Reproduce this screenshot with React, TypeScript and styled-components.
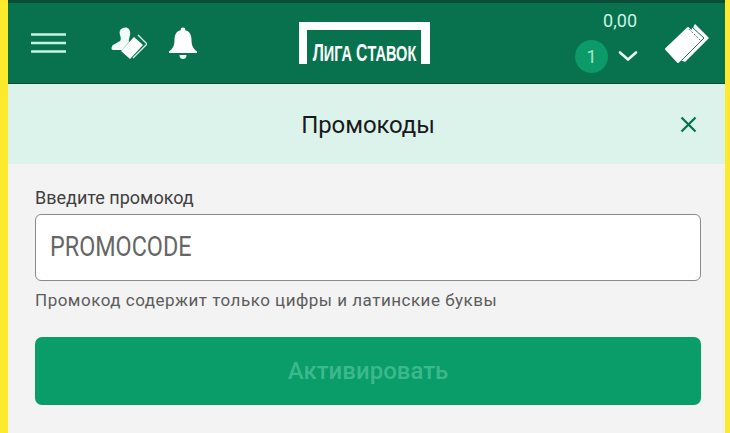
import React from "react";
import styled, { createGlobalStyle } from "styled-components";

const Global = createGlobalStyle`
  html, body { margin: 0; padding: 0; background: #f3f3f3; }
  * { box-sizing: border-box; }
`;

const Frame = styled.div`
  width: 730px;
  height: 433px;
  overflow: hidden;
  border-left: 8px solid #fdea2c;
  border-right: 5px solid #fdea2c;
  background: #f3f3f3;
  font-family: Roboto, "Noto Sans", sans-serif;
  display: flex;
  flex-direction: column;
`;

const Header = styled.header`
  height: 84px;
  flex: none;
  background: #08724f;
  border-top: 3px solid #0b4c39;
  border-bottom: 1px solid #0a4f3b;
  display: flex;
  align-items: center;
`;

const LeftIcons = styled.div`
  width: 280px;
  display: flex;
  align-items: center;
  padding-left: 23px;
`;

const IconSlot = styled.div<{ $w: number; $ml?: number }>`
  width: ${(p) => p.$w}px;
  margin-left: ${(p) => p.$ml ?? 0}px;
  display: flex;
  flex: none;
`;

const LogoFrame = styled.div`
  margin-left: 11px;
  width: 131px;
  height: 42px;
  flex: none;
  border-top: 8px solid #fff;
  border-left: 8px solid #fff;
  border-right: 9px solid #fff;
  display: flex;
  align-items: flex-end;
  justify-content: center;
`;

const LogoText = styled.div`
  flex: none;
  color: #fff;
  font-family: "Liberation Sans", sans-serif;
  font-weight: 700;
  font-size: 22px;
  line-height: 20px;
  white-space: nowrap;
  text-transform: uppercase;
  transform: scaleX(0.66);
`;

const LogoInitial = styled.span`
  font-size: 24px;
`;

const Balance = styled.div`
  margin-left: 138px;
  margin-bottom: 2px;
  width: 70px;
  display: flex;
  flex-direction: column;
  align-items: flex-end;
`;

const Amount = styled.div`
  color: #c8f5e6;
  font-size: 18px;
  line-height: 20px;
  margin-right: 1px;
`;

const CountRow = styled.div`
  display: flex;
  align-items: center;
  gap: 10px;
  margin-top: 9px;
`;

const Badge = styled.div`
  width: 33px;
  height: 33px;
  border-radius: 50%;
  background: #0c9a68;
  color: #a9e6cf;
  font-size: 18px;
  display: flex;
  align-items: center;
  justify-content: center;
`;

const Banner = styled.div`
  height: 80px;
  flex: none;
  background: #dcf3ec;
  position: relative;
  display: flex;
  align-items: center;
  justify-content: center;
  color: #1a1a1a;
  font-size: 24px;
  letter-spacing: -0.1px;
  padding: 1px 0 0 3px;
`;

const Close = styled.div`
  position: absolute;
  right: 28px;
  top: 32px;
  display: flex;
`;

const Form = styled.main`
  padding: 23px 24px 0 27px;
  display: flex;
  flex-direction: column;
`;

const Label = styled.div`
  color: #3f3f3f;
  font-size: 18px;
  line-height: 22px;
`;

const Input = styled.div`
  margin-top: 5px;
  height: 67px;
  border: 1px solid #8a8a8a;
  border-radius: 6px;
  background: #fff;
  display: flex;
  align-items: center;
  padding-left: 14px;
  padding-bottom: 1px;
`;

const InputValue = styled.span`
  color: #666;
  font-size: 27px;
  transform: scaleX(0.865);
  transform-origin: left center;
`;

const Hint = styled.div`
  margin-top: 8px;
  color: #5c5c5c;
  font-size: 17px;
  line-height: 22px;
  letter-spacing: 0.5px;
`;

const Action = styled.div`
  margin-top: 26px;
  height: 68px;
  border-radius: 7px;
  background: #0a9c69;
  color: #3cb98c;
  font-size: 24px;
  font-weight: 500;
  display: flex;
  align-items: center;
  justify-content: center;
`;

const Burger = () => (
  <svg width="36" height="22" viewBox="0 0 36 22">
    <path d="M0 2.5h35M0 11h35M0 19.5h35" stroke="#c5f3e4" strokeWidth="2.6" />
  </svg>
);

const Person = () => (
  <svg width="36" height="32" viewBox="0 0 36 32">
    <path d="M12 1c5-2 8 2 7 7-.5 3-1.5 5-1 7l-7 8H2c-2 0-2-3 0-5l7-4c1-1 1-3 0-6-1-3 0-6 3-7z" fill="#f2fbf8" />
    <path d="M23 10l9 8-13 14-9-8z" fill="#fff" />
    <path d="M27 8l9 9-14 14" fill="none" stroke="#d6f3ea" strokeWidth="1.4" />
  </svg>
);

const Bell = () => (
  <svg width="28" height="33" viewBox="0 0 28 33">
    <circle cx="14" cy="3" r="2.4" fill="#fff" />
    <path d="M14 3c6 0 8.500 4 8.500 10 0 6 2 9 5.500 11.500V26H0v-1.500C3.500 22 5.500 19 5.500 13 5.500 7 8 3 14 3z" fill="#fff" />
    <path d="M10.500 28h7c0 3-1.500 4-3.500 4s-3.500-1-3.500-4z" fill="#e4f7f0" />
  </svg>
);

const Chevron = () => (
  <svg width="20" height="12" viewBox="0 0 20 12">
    <path d="M2 1.500l8 7L18 1.500" fill="none" stroke="#e8fbf4" strokeWidth="2.600" strokeLinecap="round" />
  </svg>
);

const Ticket = () => (
  <svg width="50" height="46" viewBox="0 0 50 46">
    <path d="M33 5l13 13-23 23-3-1z" fill="#fff" stroke="#fff" strokeWidth="1.500" strokeLinejoin="round" />
    <path d="M30 7l12 11-22 22-2-1z" fill="#fff" stroke="#08724f" strokeWidth="1" strokeLinejoin="round" />
    <path d="M4 29L26 8l12 12-22 22z" fill="#fff" stroke="#fff" strokeWidth="2" strokeLinejoin="round" />
    <path d="M27 9l12 12" stroke="#4d7f6e" strokeWidth="1" strokeDasharray="2 1.500" />
  </svg>
);

const CloseIcon = () => (
  <svg width="17" height="17" viewBox="0 0 17 17">
    <path d="M1.500 1.500l14 14M15.500 1.500l-14 14" stroke="#08724f" strokeWidth="2.300" />
  </svg>
);

export default function App() {
  return (
    <>
      <Global />
      <Frame>
        <Header>
          <LeftIcons>
            <Burger />
            <IconSlot $w={36} $ml={44}><Person /></IconSlot>
            <IconSlot $w={28} $ml={22}><Bell /></IconSlot>
          </LeftIcons>
          <LogoFrame>
            <LogoText><LogoInitial>Л</LogoInitial>ига <LogoInitial>С</LogoInitial>тавок</LogoText>
          </LogoFrame>
          <Balance>
            <Amount>0,00</Amount>
            <CountRow>
              <Badge>1</Badge>
              <Chevron />
            </CountRow>
          </Balance>
          <IconSlot $w={50} $ml={24}><Ticket /></IconSlot>
        </Header>
        <Banner>
          Промокоды
          <Close><CloseIcon /></Close>
        </Banner>
        <Form>
          <Label>Введите промокод</Label>
          <Input><InputValue>PROMOCODE</InputValue></Input>
          <Hint>Промокод содержит только цифры и латинские буквы</Hint>
          <Action>Активировать</Action>
        </Form>
      </Frame>
    </>
  );
}
